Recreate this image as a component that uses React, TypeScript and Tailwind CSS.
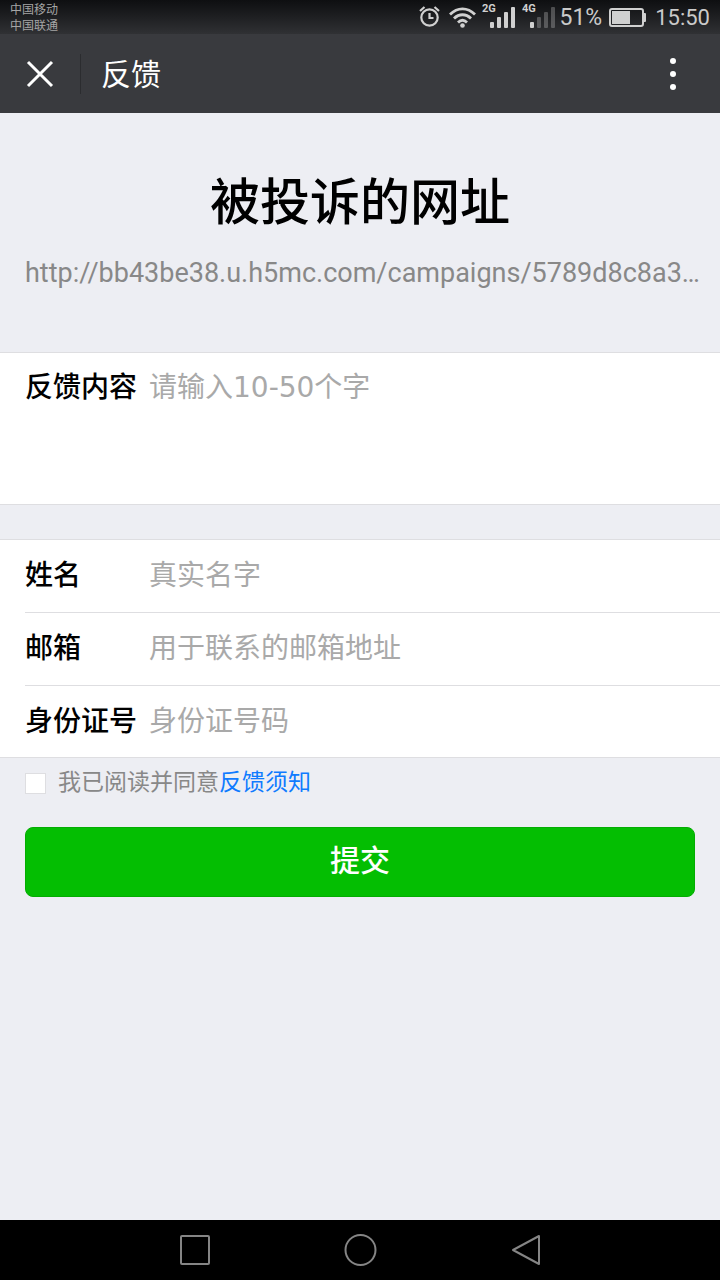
import { useState } from "react";

const FIELDS = [
    { id: "name", label: "姓名", placeholder: "真实名字", type: "text" },
    { id: "email", label: "邮箱", placeholder: "用于联系的邮箱地址", type: "email" },
    { id: "idcard", label: "身份证号", placeholder: "身份证号码", type: "text" },
];

const Signal = ({ label, level }: { label: string; level: number }) => (
    <svg width="33" height="28" viewBox="0 0 33 28" fill="#d0d0d0">
        <text x="0" y="9" fontSize="11" fontWeight="700" fontFamily="Roboto, sans-serif">{label}</text>
        {[6, 11, 16, 21].map((h, i) => (
            <rect key={h} x={8 + i * 7} y={25 - h} width="4" height={h} rx="1" opacity={i < level ? 1 : 0.3} />
        ))}
    </svg>
);

const StatusBar = () => (
    <div className="flex h-[34px] items-center justify-between bg-linear-to-b from-[#0e0f11] to-[#303134] px-[10px] text-[#cacaca]">
        <div className="flex flex-col pt-[2px] text-[12px] leading-[16px] text-[#a5a5a5]">
            <span>中国移动</span>
            <span>中国联通</span>
        </div>
        <div className="flex items-center">
            <svg className="mr-[8px]" width="22" height="24" viewBox="0 0 22 24" fill="none" stroke="#d0d0d0" strokeWidth="2.200">
                <circle cx="10.500" cy="12.500" r="8.200" />
                <path d="M10.500 8v5h4M1 6l4.500-4M20 6l-4.500-4" />
            </svg>
            <svg className="mr-[5px]" width="28" height="24" viewBox="0 0 28 24" fill="none" stroke="#d0d0d0" strokeWidth="2.800">
                <path d="M1 9.500C8.500 2 18.500 2 26 9.500M5 13.500c5-5 12-5 17 0M9 17.500c3-3 6-3 9 0" />
                <circle cx="13.500" cy="20.500" r="2.300" fill="#d0d0d0" stroke="none" />
            </svg>
            <div className="mr-[7px]"><Signal label="2G" level={4} /></div>
            <div className="mr-[5px]"><Signal label="4G" level={1} /></div>
            <span className="mr-[7px] pt-[2px] text-[23px] leading-[34px]">51%</span>
            <svg className="mr-[8px]" width="38" height="20" viewBox="0 0 38 20">
                <rect x="1" y="2" width="33" height="17" rx="2" fill="none" stroke="#d0d0d0" strokeWidth="2" />
                <rect x="3" y="4" width="18" height="13" fill="#d0d0d0" />
                <path d="M35 6h1q1 0 1 1v7q0 1-1 1h-1z" fill="#d0d0d0" />
            </svg>
            <span className="pt-[2px] text-[22px] leading-[34px]">15:50</span>
        </div>
    </div>
);

const TopBar = () => (
    <header className="flex h-[79px] items-center bg-[#393a3e] text-white">
        <button type="button" aria-label="关闭" className="flex h-[79px] w-[80px] items-center justify-center">
            <svg width="28" height="28" viewBox="0 0 28 28" fill="none" stroke="#fff" strokeWidth="3">
                <path d="M2 2l24 24M26 2L2 26" />
            </svg>
        </button>
        <div className="h-10 w-px bg-[#2b2c2f]" />
        <h1 className="ml-5 flex-1 pt-[2px] text-[30px] leading-[40px]">反馈</h1>
        <button type="button" aria-label="更多" className="flex h-[79px] w-[94px] items-center justify-center">
            <svg width="8" height="34" viewBox="0 0 8 34" fill="#fff">
                <circle cx="4" cy="4" r="3" />
                <circle cx="4" cy="17" r="3" />
                <circle cx="4" cy="30" r="3" />
            </svg>
        </button>
    </header>
);

const NavBar = () => (
    <nav className="flex h-[60px] items-center justify-center bg-black">
        <button type="button" aria-label="最近任务" className="flex h-[60px] w-[165px] items-center justify-center">
            <svg width="32" height="32" viewBox="0 0 32 32" fill="none" stroke="#858585" strokeWidth="2">
                <rect x="2" y="2" width="28" height="28" rx="1" />
            </svg>
        </button>
        <button type="button" aria-label="主屏幕" className="flex h-[60px] w-[165px] items-center justify-center">
            <svg width="34" height="34" viewBox="0 0 34 34" fill="none" stroke="#858585" strokeWidth="2">
                <circle cx="17.500" cy="17" r="15" />
            </svg>
        </button>
        <button type="button" aria-label="返回" className="flex h-[60px] w-[165px] items-center justify-center">
            <svg width="32" height="32" viewBox="0 0 32 32" fill="none" stroke="#858585" strokeWidth="2" strokeLinejoin="round">
                <path d="M30 2v28L4 16z" />
            </svg>
        </button>
    </nav>
);

const App = () => {
    const [agreed, setAgreed] = useState(false);

    return (
        <div lang="zh-CN" className="flex min-h-screen flex-col bg-[#edeef3] font-[Roboto,'Noto_Sans_CJK_SC',sans-serif]">
            <StatusBar />
            <TopBar />

            <main className="flex-1">
                <div className="pt-[54px] pb-[61px]">
                    <h2 className="text-center text-[50px] leading-[72px] font-medium text-black">被投诉的网址</h2>
                    <p className="mt-[16px] truncate pr-[12px] pl-[25px] text-[27px] leading-[36px] text-[#888888]">
                        http://bb43be38.u.h5mc.com/campaigns/5789d8c8a3…
                    </p>
                </div>

                <form onSubmit={(e) => e.preventDefault()}>
                    <div className="flex border-y border-[#dedee1] bg-white px-[25px] pt-[15px] pb-[12px] text-[28px] leading-[40px]">
                        <label htmlFor="content" className="w-[124px] shrink-0 font-medium text-black">反馈内容</label>
                        <textarea
                            id="content"
                            placeholder="请输入10-50个字"
                            className="block h-[124px] min-w-0 flex-1 resize-none outline-none placeholder:text-[#a9a9a9] font-['DejaVu_Sans','Noto_Sans_CJK_SC',sans-serif]"
                        />
                    </div>

                    <div className="mt-[34px] border-y border-[#dedee1] bg-white pl-[25px] text-[28px] leading-[40px]">
                        {FIELDS.map((f) => (
                            <div key={f.id} className="flex h-[73px] items-center border-b border-[#dedee1] last:h-[71px] last:border-b-0">
                                <label htmlFor={f.id} className="w-[124px] shrink-0 font-medium text-black">{f.label}</label>
                                <input
                                    id={f.id}
                                    type={f.type}
                                    placeholder={f.placeholder}
                                    className="min-w-0 flex-1 outline-none placeholder:text-[#a9a9a9]"
                                />
                            </div>
                        ))}
                    </div>

                    <div className="flex items-center px-[25px] pt-[8px] text-[23px] leading-[34px] text-[#888888]">
                        <input
                            id="agree"
                            type="checkbox"
                            checked={agreed}
                            onChange={(e) => setAgreed(e.target.checked)}
                            className="mr-[12px] size-[21px] appearance-none border border-[#dedee1] bg-white checked:bg-[#04be02]"
                        />
                        <label htmlFor="agree">我已阅读并同意</label>
                        <a href="#notice" className="text-[#0f7bff]">反馈须知</a>
                    </div>

                    <div className="px-[25px] pt-[27px]">
                        <button type="submit" className="h-[70px] w-full rounded-lg border border-[#04ad02] bg-[#04be02] pb-[2px] text-[30px] leading-[40px] font-medium text-white">
                            提交
                        </button>
                    </div>
                </form>
            </main>

            <NavBar />
        </div>
    );
};

export default App;
